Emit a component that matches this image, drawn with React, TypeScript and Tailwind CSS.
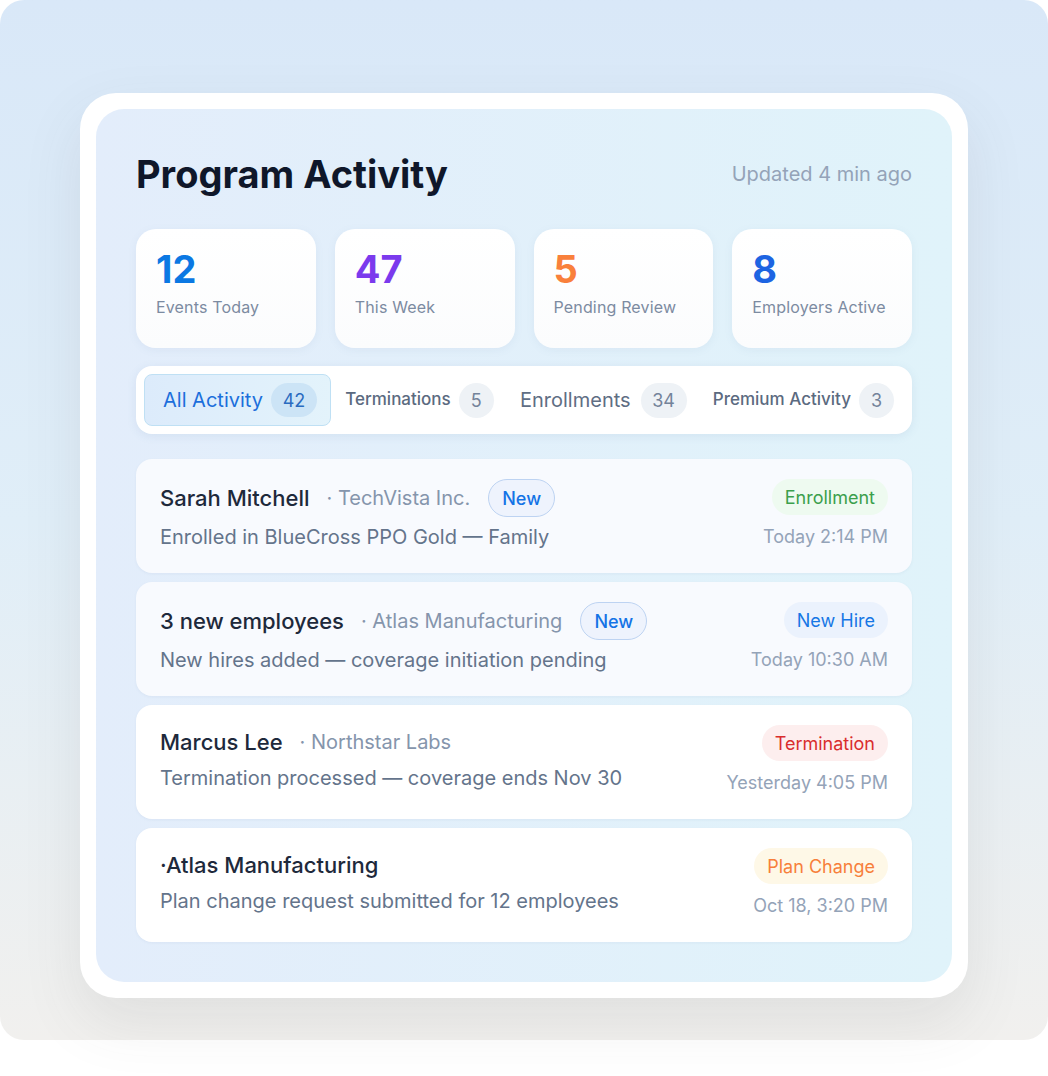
import React from "react";

const stats = [
  { value: "12", label: "Events Today", color: "text-[#0b78e3]" },
  { value: "47", label: "This Week", color: "text-[#7b3aed]" },
  { value: "5", label: "Pending Review", color: "text-[#f9803b]" },
  { value: "8", label: "Employers Active", color: "text-[#1d64e2]" },
];

type Item = {
  name: string;
  company?: string;
  isNew?: boolean;
  desc: string;
  tag: string;
  tagClass: string;
  time: string;
  unread?: boolean;
};

const items: Item[] = [
  {
    name: "Sarah Mitchell",
    company: "· TechVista Inc.",
    isNew: true,
    desc: "Enrolled in BlueCross PPO Gold — Family",
    tag: "Enrollment",
    tagClass: "bg-[#eefaf0] text-[#3b9f4c]",
    time: "Today 2:14 PM",
    unread: true,
  },
  {
    name: "3 new employees",
    company: "· Atlas Manufacturing",
    isNew: true,
    desc: "New hires added — coverage initiation pending",
    tag: "New Hire",
    tagClass: "bg-[#ebf2fd] text-[#1677e5]",
    time: "Today 10:30 AM",
    unread: true,
  },
  {
    name: "Marcus Lee",
    company: "· Northstar Labs",
    desc: "Termination processed — coverage ends Nov 30",
    tag: "Termination",
    tagClass: "bg-[#fdeeee] text-[#d92d2d]",
    time: "Yesterday 4:05 PM",
  },
  {
    name: "·Atlas Manufacturing",
    desc: "Plan change request submitted for 12 employees",
    tag: "Plan Change",
    tagClass: "bg-[#fef8e7] text-[#f77f3a]",
    time: "Oct 18, 3:20 PM",
  },
];

function Tabs() {
  return (
    <div className="mt-[18px] flex h-[68px] items-center justify-between rounded-2xl bg-white pl-2 pr-[6px] shadow-[0_2px_10px_rgba(100,130,170,0.12)]">
      <div className="flex h-[52px] items-center gap-2 rounded-lg border border-[#bfe0f4] bg-gradient-to-r from-[#dcebfb] to-[#e3f3fb] pl-[18px] pr-[13px]">
        <span className="text-[20px] text-[#1c6fdc]">All Activity</span>
        <span className="flex h-[34px] w-[46px] items-center justify-center rounded-full bg-[#cce4f6] text-[18px] text-[#2a6bc0]">
          42
        </span>
      </div>
      <div className="flex items-center gap-2 px-3">
        <span className="text-[17px] font-medium text-[#5b6a80]">Terminations</span>
        <span className="flex h-[35px] w-[35px] items-center justify-center rounded-full bg-[#eef2f6] text-[18px] text-[#74839a]">
          5
        </span>
      </div>
      <div className="flex items-center gap-[10px] px-3">
        <span className="text-[20px] text-[#5f6e84]">Enrollments</span>
        <span className="flex h-[35px] w-[46px] items-center justify-center rounded-full bg-[#eef2f6] text-[18px] text-[#74839a]">
          34
        </span>
      </div>
      <div className="flex items-center gap-2 px-3">
        <span className="text-[17px] font-medium text-[#5b6a80]">Premium Activity</span>
        <span className="flex h-[35px] w-[35px] items-center justify-center rounded-full bg-[#eef2f6] text-[18px] text-[#74839a]">
          3
        </span>
      </div>
    </div>
  );
}

function Row({ item }: { item: Item }) {
  return (
    <div
      className={`flex items-start justify-between rounded-2xl px-6 pb-[22px] pt-5 shadow-[0_1px_3px_rgba(100,130,170,0.08)] ${
        item.unread ? "bg-[#f8fafe]" : "bg-white"
      }`}
    >
      <div className="flex flex-col">
        <div className={`flex items-center ${item.isNew ? "h-[38px]" : "h-[34px]"}`}>
          <span className="text-[22px] font-medium text-[#1e293b]">{item.name}</span>
          {item.company && (
            <span className="ml-[17px] text-[20px] text-[#8595ac]">{item.company}</span>
          )}
          {item.isNew && (
            <span className="ml-[18px] flex h-[38px] items-center rounded-full border border-[#bdd3f2] bg-[#eef3fd] px-[13px] text-[18px] font-medium text-[#1473e6]">
              New
            </span>
          )}
        </div>
        <div
          className={`text-[20px] leading-7 text-[#64748b] ${item.isNew ? "mt-[6px]" : "mt-[5px]"}`}
        >
          {item.desc}
        </div>
      </div>
      <div className="flex flex-col items-end">
        <span className={`flex h-9 items-center rounded-full px-[13px] text-[18px] ${item.tagClass}`}>
          {item.tag}
        </span>
        <span className="mt-2 text-[18px] leading-7 text-[#94a3b8]">{item.time}</span>
      </div>
    </div>
  );
}

export default function App() {
  return (
    <div
      className="min-h-[1076px] bg-white"
      style={{ fontFamily: "Inter, 'Noto Sans', sans-serif" }}
    >
      <div className="h-[1040px] rounded-3xl bg-gradient-to-b from-[#d9e8f8] via-[#e0eef8] to-[#f1f0ee] px-20 pt-[93px]">
        <div className="rounded-[36px] bg-white p-4 shadow-[0_24px_60px_rgba(80,80,80,0.10)]">
          <div className="rounded-[28px] bg-gradient-to-r from-[#e3edfb] to-[#e0f3fa] px-10 pb-10 pt-10">
            <div className="flex h-[50px] items-center justify-between">
              <h1 className="text-[38px] font-bold text-[#0f172a]">Program Activity</h1>
              <span className="text-[20px] text-[#94a3b8]">Updated 4 min ago</span>
            </div>

            <div className="mt-[30px] grid grid-cols-4 gap-[19px]">
              {stats.map((s) => (
                <div
                  key={s.label}
                  className="h-[119px] rounded-[20px] bg-gradient-to-b from-white to-[#fbfcfd] px-5 pt-5 shadow-[0_2px_8px_rgba(100,130,170,0.08)]"
                >
                  <div className={`text-[38px] font-bold leading-10 ${s.color}`}>{s.value}</div>
                  <div className="mt-[6px] text-[16px] leading-6 tracking-[0.01em] text-[#7c8ba1]">
                    {s.label}
                  </div>
                </div>
              ))}
            </div>

            <Tabs />

            <div className="mt-[25px] flex flex-col gap-[9px]">
              {items.map((it) => (
                <Row key={it.name} item={it} />
              ))}
            </div>
          </div>
        </div>
      </div>
    </div>
  );
}
